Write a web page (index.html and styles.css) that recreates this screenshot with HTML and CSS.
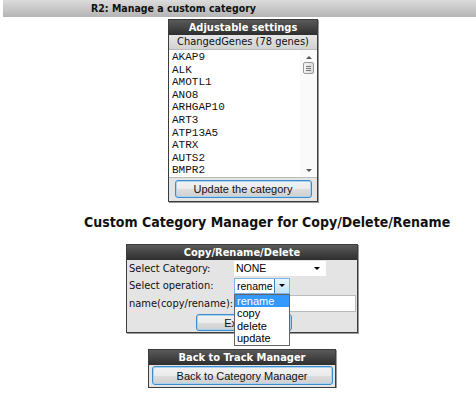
FILE: index.html
```html
<!DOCTYPE html>
<html>
<head>
<meta charset="utf-8">
<link rel="stylesheet" href="styles.css">
</head>
<body>
<div class="topbar"><span class="toptext">R2: Manage a custom category</span></div>

<div class="panel settings">
  <div class="phead">Adjustable settings</div>
  <div class="psub">ChangedGenes (78 genes)</div>
  <div class="listbox">
    <div class="items">
      <div>AKAP9</div><div>ALK</div><div>AMOTL1</div><div>ANO8</div><div>ARHGAP10</div>
      <div>ART3</div><div>ATP13A5</div><div>ATRX</div><div>AUTS2</div><div>BMPR2</div>
    </div>
    <div class="vscroll">
      <span class="arrow up"></span>
      <span class="thumb"><i></i><i></i><i></i></span>
      <span class="track"></span>
      <span class="arrow down"></span>
    </div>
  </div>
  <div class="btnrow"><button class="btn update">Update the category</button></div>
</div>

<h2 class="title">Custom Category Manager for Copy/Delete/Rename</h2>

<div class="panel crd">
  <div class="phead">Copy/Rename/Delete</div>
  <div class="form">
    <div class="row"><span class="lbl">Select Category:</span><div class="sel none">NONE<span class="caret"></span></div></div>
    <div class="row"><span class="lbl">Select operation:</span>
      <div class="selwrap">
        <div class="sel op">rename<span class="dbtn"><span class="caret"></span></span></div>
        <ul class="dropdown">
          <li class="hl">rename</li><li>copy</li><li>delete</li><li>update</li>
        </ul>
      </div>
    </div>
    <div class="row"><span class="lbl">name(copy/rename):</span><div class="input"></div></div>
    <div class="execrow"><button class="btn exec">Execute</button></div>
  </div>
</div>

<div class="panel back">
  <div class="phead">Back to Track Manager</div>
  <div class="btnrow"><button class="btn backbtn">Back to Category Manager</button></div>
</div>
</body>
</html>
```

FILE: styles.css
```css
html, body { margin: 0; padding: 0; background: #fff; }
body { font-family: "DejaVu Sans Condensed", "DejaVu Sans", Verdana, sans-serif; color: #000; }

.topbar {
  margin-left: 3px;
  height: 17px;
  background: linear-gradient(#dcdcdc, #b4b4b4);
  font-weight: bold;
  font-size: 10.5px;
  line-height: 17px;
  color: #111;
}
.toptext { padding-left: 88px; }

.panel {
  border: 1px solid #3c3c3c;
  box-shadow: 1px 1px 0 #999;
  background: #e4e4e4;
}
.phead {
  background: linear-gradient(#5a5a5a, #2e2e2e);
  color: #fff;
  font-weight: bold;
  font-size: 11px;
  text-align: center;
  height: 15px;
  line-height: 15px;
}

.settings { width: 148px; margin: 2px 0 0 168px; }
.psub {
  background: linear-gradient(#e6e6e6, #d2d2d2);
  font-size: 11px;
  text-align: center;
  height: 14px;
  line-height: 14px;
  color: #111;
}
.listbox {
  display: flex;
  height: 127px;
  background: #fff;
  border-top: 1px solid #bbb;
  border-bottom: 1px solid #bbb;
}
.items {
  flex: 1;
  padding: 1px 0 0 3px;
  font-family: "Liberation Mono", "Courier New", monospace;
  font-size: 11px;
  line-height: 12.6px;
  overflow: hidden;
  color: #111;
}
.vscroll {
  width: 17px;
  display: flex;
  flex-direction: column;
  align-items: center;
  background: #fafafa;
}
.arrow { width: 0; height: 0; border-left: 3px solid transparent; border-right: 3px solid transparent; margin: 6px 0 3px; }
.arrow.up { border-bottom: 3px solid #555; }
.arrow.down { border-top: 3px solid #555; margin: 3px 0 5px; }
.thumb {
  width: 11px; height: 12px;
  border: 1px solid #9a9a9a;
  border-radius: 2px;
  background: linear-gradient(90deg, #f4f4f4, #dcdcdc);
  display: flex; flex-direction: column; align-items: center; justify-content: center; gap: 1px;
  box-sizing: border-box;
}
.thumb i { display: block; width: 5px; height: 1px; background: #777; }
.track { flex: 1; }

.btnrow { display: flex; justify-content: center; padding: 2px 0 3px; }
.btn {
  font-family: "Liberation Sans", Arial, sans-serif;
  font-size: 11px;
  color: #111;
  background: linear-gradient(#f2f2f2 0%, #ebebeb 50%, #dddddd 51%, #cfcfcf 100%);
  border: 1px solid #3c8ccc;
  border-radius: 3px;
  box-shadow: inset 0 0 0 1px #a9d3f1;
  padding: 0;
  height: 18px;
}
.update { width: 137px; }

.title {
  font-size: 14px;
  font-weight: bold;
  margin: 12px 0 0 84px;
  height: 17px;
  line-height: 17px;
  color: #111;
  white-space: nowrap;
}

.crd { width: 230px; margin: 13px 0 0 126px; }
.form { padding: 0 0 1px 2px; font-size: 11px; }
.row { display: flex; align-items: center; height: 17px; }
.row + .row { height: 17.5px; }
.lbl { width: 105px; color: #111; white-space: nowrap; }
.sel {
  position: relative;
  font-family: "Liberation Sans", Arial, sans-serif;
  font-size: 10.5px;
  background: #fff;
  height: 15px;
  line-height: 15px;
  padding-left: 2px;
  box-sizing: border-box;
}
.sel.none { width: 92px; }
.sel .caret {
  position: absolute; right: 6px; top: 6px;
  width: 0; height: 0;
  border-left: 3px solid transparent; border-right: 3px solid transparent; border-top: 3px solid #000;
}
.selwrap { position: relative; }
.sel.op { width: 56px; border: 1px solid #7eb4ea; line-height: 14px; height: 16px; }
.dbtn {
  position: absolute; right: 0; top: 0; bottom: 0; width: 14px;
  background: linear-gradient(#eaf6fd, #bfe3f8);
  border-left: 1px solid #3c7fb1;
}
.dbtn .caret { right: 4px; top: 5px; }
.dropdown {
  position: absolute; left: 0; top: 16px;
  margin: 0; padding: 0; list-style: none;
  width: 56px; box-sizing: border-box;
  border: 1px solid #646464;
  background: #fff;
  font-family: "Liberation Sans", Arial, sans-serif;
  font-size: 11px;
  line-height: 12.5px;
  z-index: 2;
}
.dropdown li { padding-left: 2px; }
.dropdown li.hl { background: #3399ff; color: #fff; }
.input { width: 122px; height: 17px; background: #fff; border: 1px solid #bbb; box-sizing: border-box; }
.execrow { display: flex; padding: 2px 0 0 67px; }
.exec { width: 96px; height: 17px; }

.back { width: 186px; margin: 16px 0 0 148px; }
.back .btnrow { padding: 1px 0 2px; }
.backbtn { width: 181px; height: 19px; }
```
